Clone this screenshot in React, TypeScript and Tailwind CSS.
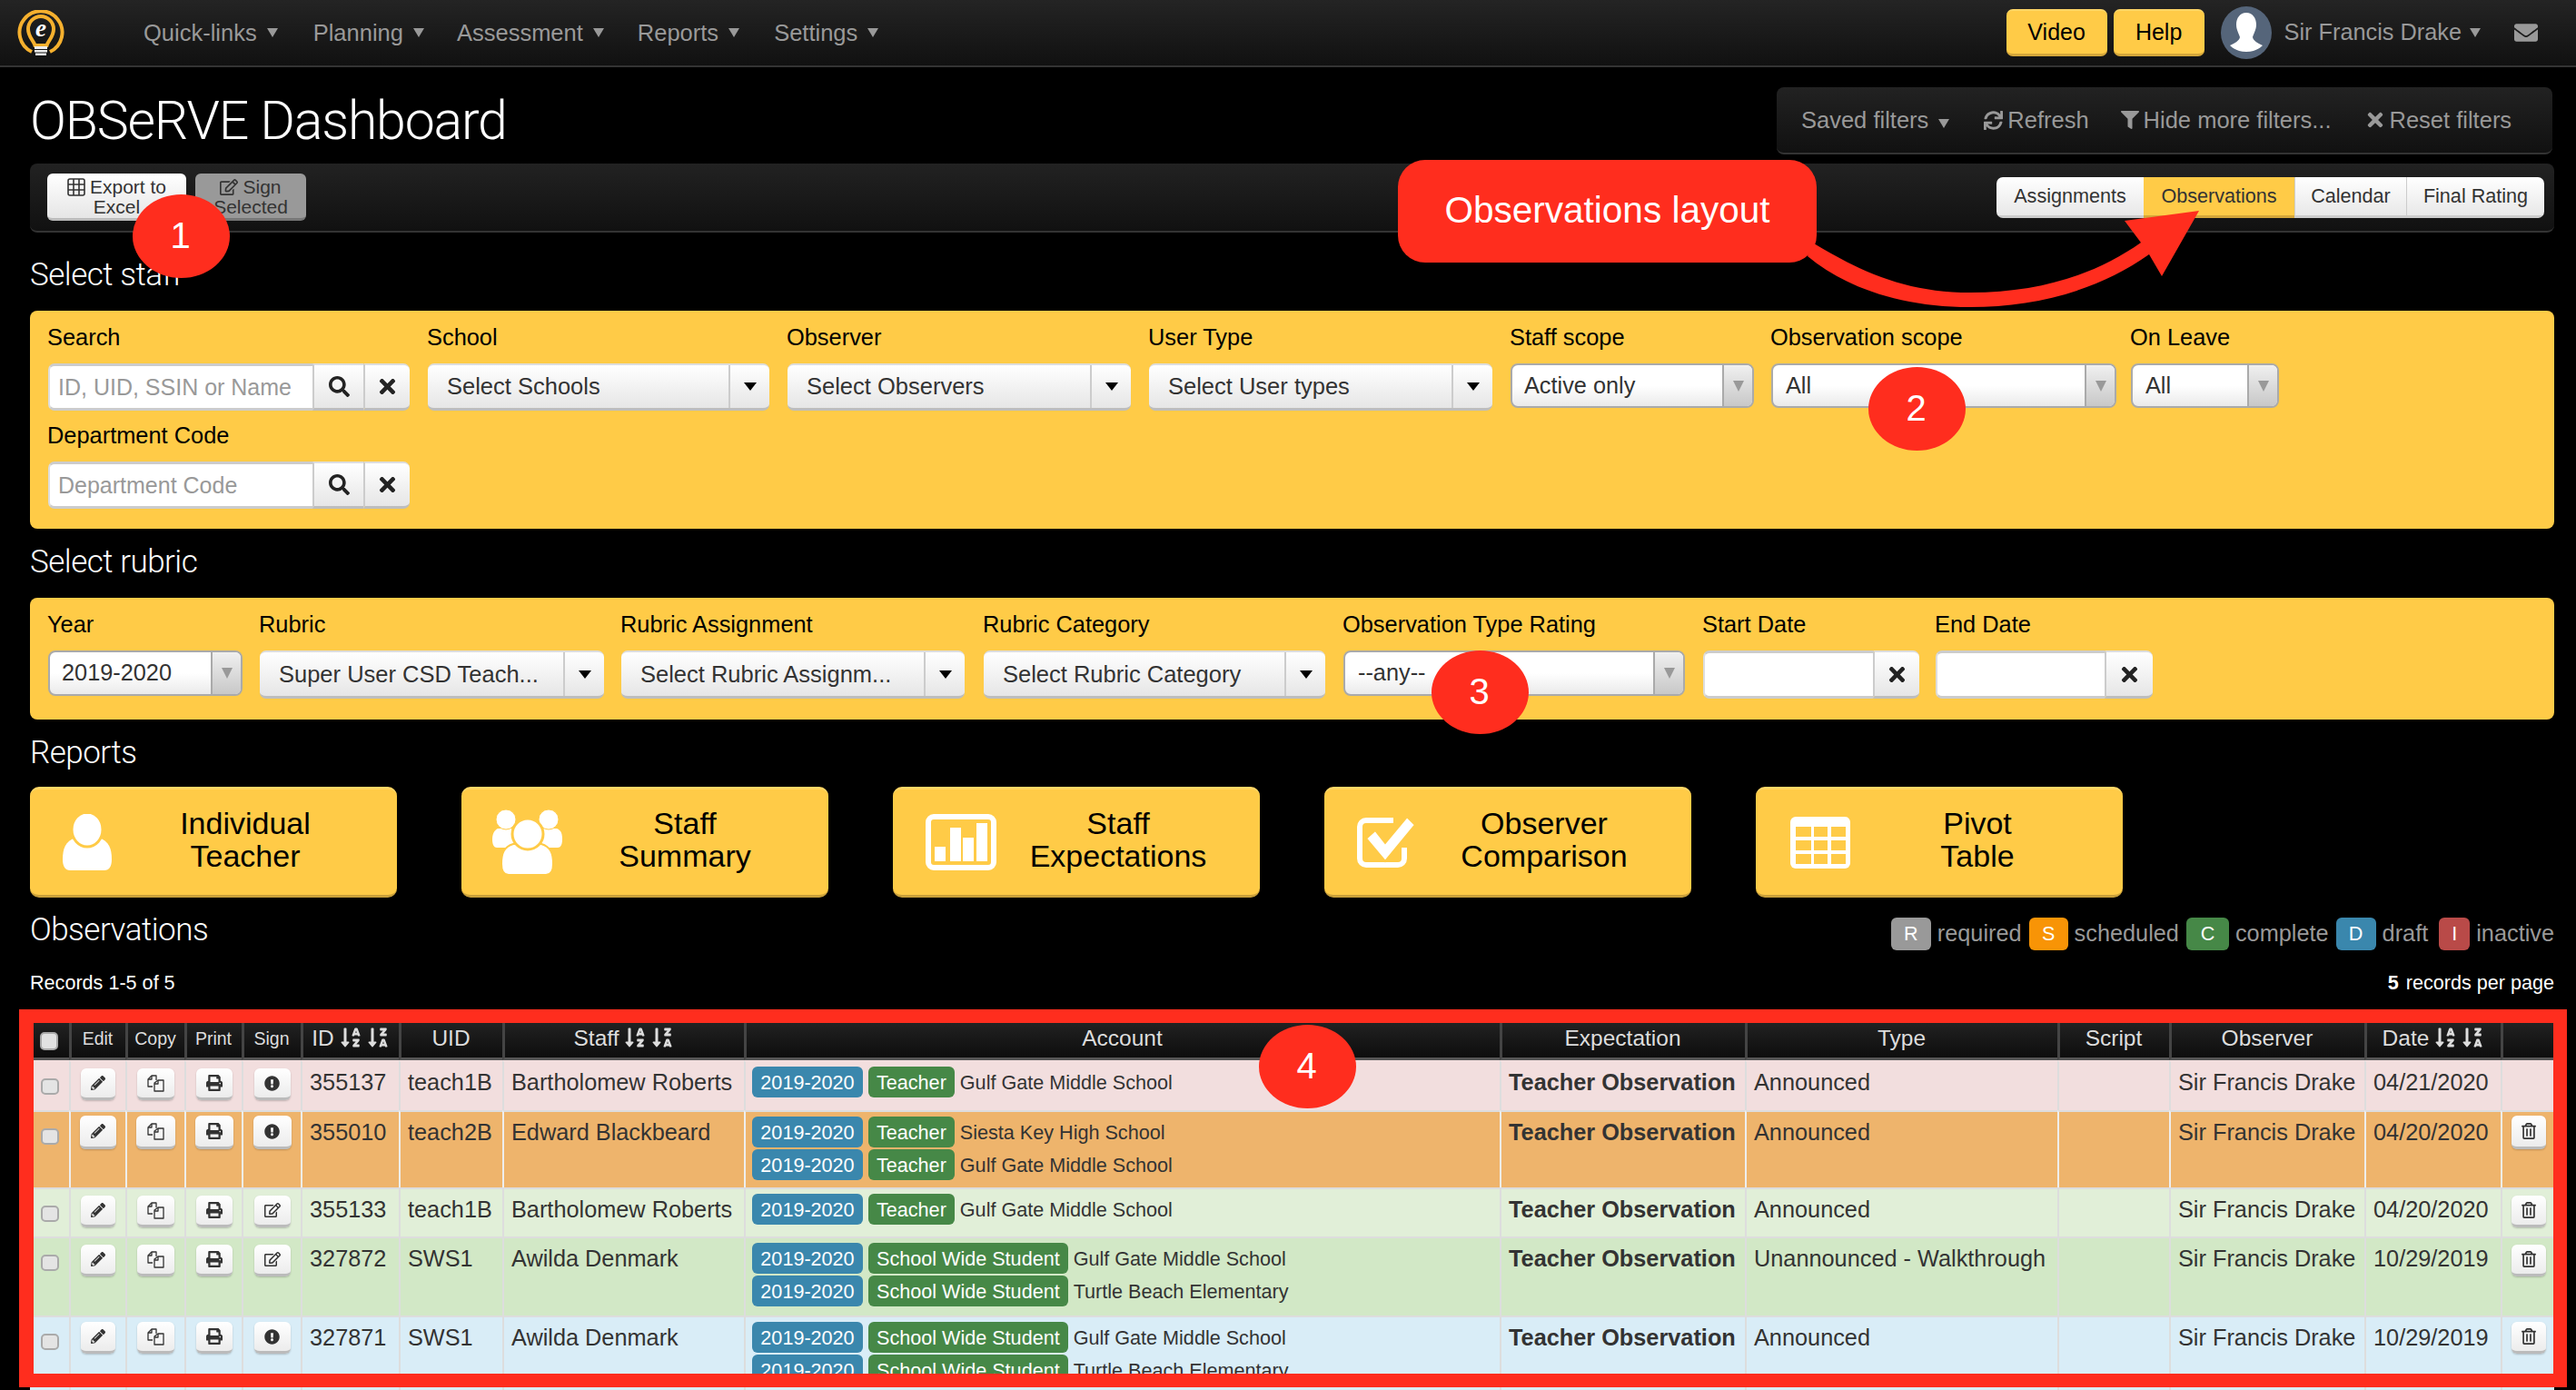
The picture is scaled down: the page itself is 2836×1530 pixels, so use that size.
import React from "react";
import {
  FaSearch, FaTimes, FaRegEdit, FaSync, FaFilter, FaEnvelope, FaSortAlphaDown, FaSortAlphaDownAlt,
  FaPencilAlt, FaPrint, FaExclamationCircle, FaRegTrashAlt,
} from "react-icons/fa";

const RED = "#ff2d1e";

function Caret() {
  return <span className="inline-block border-x-[6.5px] border-t-[10px] border-x-transparent border-t-[#999]" />;
}

function Logo() {
  return (
    <svg width="52" height="50" viewBox="0 0 52 50">
      <path d="M16 46A23.5 23.5 0 1 1 36 46" fill="none" stroke="#f5b02e" strokeWidth="4" />
      <path d="M19.5 39C18 33 12 30 12 21A14 14 0 0 1 40 21C40 30 34 33 32.5 39Z" fill="none" stroke="#f5b02e" strokeWidth="4" />
      <rect x="19" y="40" width="14" height="3" fill="#eee" />
      <rect x="19" y="44" width="14" height="2.5" fill="#eee" />
      <rect x="20" y="47.5" width="12" height="2.5" fill="#eee" />
      <text x="26" y="29" textAnchor="middle" fontFamily="Liberation Serif" fontStyle="italic" fontWeight="700" fontSize="27" fill="#fff">e</text>
    </svg>
  );
}

function Avatar() {
  return (
    <svg width="56" height="58" viewBox="0 0 56 58">
      <ellipse cx="28" cy="29" rx="28" ry="29" fill="#55657a" />
      <path d="M28 7C35 7 39 13 39 20C39 26 36 30 35 34C36 38 40 40 46 43C46 43 40 50 28 50C16 50 10 43 10 43C16 40 20 38 21 34C20 30 17 26 17 20C17 13 21 7 28 7Z" fill="#fff" />
    </svg>
  );
}

function GridIcon() {
  return (
    <svg width="20" height="20" viewBox="0 0 20 20" fill="none" stroke="#333" strokeWidth="1.6">
      <rect x="1" y="1" width="18" height="18" rx="2" />
      <path d="M1 7H19M1 13H19M7 1V19M13 1V19" />
    </svg>
  );
}

function NavItem({ label, className }: { label: string; className: string }) {
  return (
    <div className={`flex items-center gap-[11px] text-[25.5px] text-[#999] ${className}`}>
      <span>{label}</span>
      <Caret />
    </div>
  );
}

function YellowBtn({ label, className }: { label: string; className: string }) {
  return (
    <div className={`flex h-[52px] items-center justify-center rounded-[7px] border-t-2 border-b-[3px] border-t-[#ffd666] border-b-[#d5a73a] bg-[#ffcb47] text-[25px] text-black ${className}`}>
      {label}
    </div>
  );
}

function TabBtn({ label, className }: { label: string; className: string }) {
  return (
    <div className={`flex h-full items-center justify-center border-b-[3px] pt-[2px] text-[21.6px] ${className}`}>{label}</div>
  );
}

function Heading({ children, className }: { children: React.ReactNode; className: string }) {
  return (
    <div className={`flex items-center font-['Roboto',sans-serif] text-[35px] font-light tracking-[-0.5px] text-white ${className}`}>
      {children}
    </div>
  );
}

function Field({ label, className, children }: { label: string; className: string; children: React.ReactNode }) {
  return (
    <div className={`flex flex-col ${className}`}>
      <div className="-ml-[1px] flex h-[40px] items-center whitespace-nowrap pt-[1px] text-[25.4px] text-black">{label}</div>
      {children}
    </div>
  );
}

const btnFace = "bg-gradient-to-b from-white to-[#e6e6e6] border-b-[3px] border-b-[#bdbdbd] border-t-2 border-t-[#ddd]";

function SearchInput({ placeholder }: { placeholder: string }) {
  return (
    <div className="flex h-[52px]">
      <input
        readOnly
        placeholder={placeholder}
        className="h-full w-[291px] rounded-l-[7px] border-y-[3px] border-l-2 border-y-[#ccc] border-l-[#ddd] bg-white pl-[9px] text-[25px] outline-none placeholder:text-[#999]"
      />
      <div className={`flex h-full w-[56px] items-center justify-center border-l-2 border-l-[#ccc] text-[#222] ${btnFace}`}>
        <FaSearch size={23} />
      </div>
      <div className={`flex h-full w-[51px] items-center justify-center rounded-r-[7px] border-l-2 border-l-[#ccc] text-[#222] ${btnFace}`}>
        <FaTimes size={25} />
      </div>
    </div>
  );
}

function SelectBtn({ label, h }: { label: string; h?: string }) {
  return (
    <div className={`flex ${h ?? "h-[52px]"} rounded-[7px] text-[25.5px] text-[#333] ${btnFace}`}>
      <div className="flex flex-1 items-center overflow-hidden whitespace-nowrap pl-[21px]">{label}</div>
      <div className="flex w-[45px] items-center justify-center border-l-2 border-l-[#ccc]">
        <span className="inline-block border-x-[7px] border-t-[9px] border-x-transparent border-t-black" />
      </div>
    </div>
  );
}

function NativeSelect({ label, h, pad }: { label: string; h: string; pad: string }) {
  return (
    <div className={`flex ${h} overflow-hidden rounded-[8px] border-2 border-[#aaa] bg-gradient-to-b from-white via-white to-[#eaeaea] text-[25.3px] text-[#333]`}>
      <div className={`flex flex-1 items-center ${pad}`}>{label}</div>
      <div className="flex w-[33px] items-center justify-center border-l-2 border-l-[#aaa] bg-gradient-to-b from-[#f0f0f0] to-[#c8c8c8]">
        <span className="inline-block border-x-[6px] border-t-[12px] border-x-transparent border-t-[#999]" />
      </div>
    </div>
  );
}

function DateInput({ inputW, btnW }: { inputW: string; btnW: string }) {
  return (
    <div className="flex h-[53px]">
      <div className={`h-full ${inputW} rounded-l-[7px] border-y-[3px] border-l-2 border-y-[#ccc] border-l-[#ddd] bg-white`} />
      <div className={`flex h-full ${btnW} items-center justify-center rounded-r-[7px] border-l-2 border-l-[#ccc] text-[#222] ${btnFace}`}>
        <FaTimes size={25} />
      </div>
    </div>
  );
}

function IconPerson() {
  return (
    <svg width="56" height="62" viewBox="0 0 56 62" className="ml-[35px] shrink-0">
      <path d="M1 50c0-12 3-20 14-24h26c11 4 14 12 14 24 0 8-3 12-8 12H9c-5 0-8-4-8-12Z" fill="#fff" />
      <ellipse cx="28" cy="17" rx="17" ry="19" fill="#fff" stroke="#ffcb47" strokeWidth="3" />
    </svg>
  );
}
function IconGroup() {
  return (
    <svg width="77" height="72" viewBox="0 0 77 72" className="ml-[34px] shrink-0">
      <path d="M0 33c0-6 2-10 6-12h14c5 2 6 6 6 12 0 6-2 9-5 9H5c-3 0-5-3-5-9Z" fill="#fff" />
      <path d="M51 33c0-6 2-10 6-12h14c5 2 6 6 6 12 0 6-2 9-5 9H56c-3 0-5-3-5-9Z" fill="#fff" />
      <ellipse cx="15" cy="11" rx="11" ry="11" fill="#fff" stroke="#ffcb47" strokeWidth="1" />
      <ellipse cx="62" cy="11" rx="11" ry="11" fill="#fff" stroke="#ffcb47" strokeWidth="1" />
      <path d="M10 60c0-12 3-19 13-22h31c10 3 13 10 13 22 0 8-3 12-8 12H18c-5 0-8-4-8-12Z" fill="#fff" stroke="#ffcb47" strokeWidth="2" />
      <ellipse cx="39" cy="27" rx="17" ry="17" fill="#fff" stroke="#ffcb47" strokeWidth="3" />
    </svg>
  );
}
function IconBars() {
  return (
    <svg width="78" height="62" viewBox="0 0 78 62" className="ml-[36px] shrink-0">
      <rect x="3" y="3" width="72" height="56" rx="6" fill="none" stroke="#fff" strokeWidth="6" />
      <rect x="10" y="36" width="12" height="16" fill="#fff" />
      <rect x="27" y="15" width="12" height="37" fill="#fff" />
      <rect x="41" y="26" width="12" height="26" fill="#fff" />
      <rect x="56" y="10" width="12" height="42" fill="#fff" />
    </svg>
  );
}
function IconCheck() {
  return (
    <svg width="66" height="57" viewBox="0 0 66 57" className="ml-[36px] shrink-0">
      <path d="M52 34v12c0 4-3 7-7 7H10c-4 0-7-3-7-7V11c0-4 3-7 7-7h30" fill="none" stroke="#fff" strokeWidth="6" />
      <path d="M10 24l10-9 11 14L55 0l9 9-33 40Z" fill="#fff" stroke="#ffcb47" strokeWidth="2" />
    </svg>
  );
}
function IconTable() {
  const rows = [11, 26, 41];
  const cols = [{ x: 6, w: 17 }, { x: 26, w: 15 }, { x: 45, w: 16 }];
  return (
    <svg width="66" height="57" viewBox="0 0 66 57" className="ml-[38px] shrink-0">
      <rect x="0" y="0" width="66" height="57" rx="6" fill="#fff" />
      {rows.map((y) => cols.map((c) => <rect key={`${y}-${c.x}`} x={c.x} y={y} width={c.w} height="11" fill="#ffcb47" />))}
    </svg>
  );
}

function ReportBtn({ icon, lines, textW }: { icon: React.ReactNode; lines: [string, string]; textW: string }) {
  return (
    <div className="flex h-[122px] w-[404px] items-center rounded-[10px] border-t-[3px] border-b-[3px] border-t-[#ffd665] border-b-[#c9a03a] bg-[#ffcb47]">
      {icon}
      <div className={`${textW} pb-[6px] text-center text-[34px] leading-[36px] text-black`}>
        <div>{lines[0]}</div>
        <div>{lines[1]}</div>
      </div>
    </div>
  );
}

function Legend({ c, bg, w, label, className }: { c: string; bg: string; w: string; label: string; className: string }) {
  return (
    <div className={`flex items-center ${className}`}>
      <div className={`flex h-[36px] ${w} items-center justify-center rounded-[6px] text-[21.6px] text-white ${bg}`}>{c}</div>
      <span className="ml-[7px] text-[25.3px] text-[#999]">{label}</span>
    </div>
  );
}

function CopyIcon() {
  return (
    <svg width="19" height="19" viewBox="0 0 19 19" fill="none" stroke="#333" strokeWidth="1.3" strokeLinejoin="round">
      <path d="M6 13H1V5l4-4h5v5" />
      <path d="M5 1v4H1" />
      <path d="M8 18V9l4-3h6v12Z" fill="#f5f5f5" />
      <path d="M12 6v4H8" />
    </svg>
  );
}

function ActBtn({ w, big, children }: { w: string; big?: boolean; children: React.ReactNode }) {
  return (
    <div className={`mx-auto flex ${big ? "h-[37px]" : "h-[35px]"} ${w} items-center justify-center rounded-[6px] border-b-[3px] border-b-[#bbb] bg-gradient-to-b from-white to-[#ececec] text-[#333] shadow-[0_1px_2px_rgba(0,0,0,0.2)]`}>
      {children}
    </div>
  );
}

function Check({ dark }: { dark?: boolean }) {
  return <div className={`mx-auto w-[20px] rounded-[5px] border-2 ${dark ? "h-[20px] border-[#aaa] bg-[#e2e2e2]" : "h-[18px] border-[#aaa] bg-[#e4e4e4]"}`} />;
}

type Acct = { badge: string; school: string };
type Row = {
  id: string; uid: string; staff: string; accts: Acct[]; type: string; observer: string; date: string;
  sign: "alert" | "edit"; trash: boolean; h: string; bg: string; btnPt: string; big?: boolean; line: string;
};

const rows: Row[] = [
  { id: "355137", uid: "teach1B", staff: "Bartholomew Roberts", accts: [{ badge: "Teacher", school: "Gulf Gate Middle School" }], type: "Announced", observer: "Sir Francis Drake", date: "04/21/2020", sign: "alert", trash: false, h: "h-[55px]", bg: "bg-[#f2dede]", btnPt: "pt-[7px]", line: "border-[#ddd] border-t-[#f2dede]" },
  { id: "355010", uid: "teach2B", staff: "Edward Blackbeard", accts: [{ badge: "Teacher", school: "Siesta Key High School" }, { badge: "Teacher", school: "Gulf Gate Middle School" }], type: "Announced", observer: "Sir Francis Drake", date: "04/20/2020", sign: "alert", trash: true, h: "h-[85px]", bg: "bg-[#eeb46c]", btnPt: "pt-[4px]", big: true, line: "border-[#eee] border-t-[#ddd]" },
  { id: "355133", uid: "teach1B", staff: "Bartholomew Roberts", accts: [{ badge: "Teacher", school: "Gulf Gate Middle School" }], type: "Announced", observer: "Sir Francis Drake", date: "04/20/2020", sign: "edit", trash: true, h: "h-[54px]", bg: "bg-[#e1efd8]", btnPt: "pt-[7px]", line: "border-[#ddd]" },
  { id: "327872", uid: "SWS1", staff: "Awilda Denmark", accts: [{ badge: "School Wide Student", school: "Gulf Gate Middle School" }, { badge: "School Wide Student", school: "Turtle Beach Elementary" }], type: "Unannounced - Walkthrough", observer: "Sir Francis Drake", date: "10/29/2019", sign: "edit", trash: true, h: "h-[87px]", bg: "bg-[#d2e8c6]", btnPt: "pt-[7px]", line: "border-[#ddd]" },
  { id: "327871", uid: "SWS1", staff: "Awilda Denmark", accts: [{ badge: "School Wide Student", school: "Gulf Gate Middle School" }, { badge: "School Wide Student", school: "Turtle Beach Elementary" }], type: "Announced", observer: "Sir Francis Drake", date: "10/29/2019", sign: "alert", trash: true, h: "h-[87px]", bg: "bg-[#d9edf7]", btnPt: "pt-[5px]", line: "border-[#ddd]" },
];

const colWidths = ["w-[43px]", "w-[62px]", "w-[65px]", "w-[63px]", "w-[65px]", "w-[108px]", "w-[114px]", "w-[266px]", "w-[832px]", "w-[270px]", "w-[344px]", "w-[123px]", "w-[215px]", "w-[150px]", "w-[59px]"];

function Th({ children, small }: { children?: React.ReactNode; small?: boolean }) {
  return (
    <th className={`h-[42px] border-l-[3px] border-b-[3px] border-l-[#444] border-b-[#555] bg-gradient-to-b from-[#222] to-[#0e0e0e] pb-[4px] pr-[2px] text-center font-normal leading-[30px] text-[#ddd] first:border-l-0 ${small ? "text-[19.5px]" : "text-[24.5px]"}`}>
      {children}
    </th>
  );
}

function Sort() {
  return (
    <span className="ml-[6px] inline-flex items-center gap-[6px] align-[-3px]">
      <FaSortAlphaDown size={24} />
      <FaSortAlphaDownAlt size={24} />
    </span>
  );
}

function Marker({ n, className }: { n: string; className: string }) {
  return (
    <div className={`absolute flex h-[92px] w-[107px] items-center justify-center rounded-[50%] bg-[#ff2d1e] pb-[2px] pr-[2px] text-[40px] text-white ${className}`}>
      {n}
    </div>
  );
}

export default function App() {
  return (
    <div className="relative h-[1530px] w-[2836px] overflow-hidden bg-black font-['Liberation_Sans',Arial,sans-serif]">
      {/* Navbar */}
      <div className="flex h-[74px] items-center border-b-2 border-b-[#333] bg-gradient-to-b from-[#242424] to-[#111] pl-[19px]">
        <Logo />
        <NavItem label="Quick-links" className="ml-[87px]" />
        <NavItem label="Planning" className="ml-[39px]" />
        <NavItem label="Assessment" className="ml-[36px]" />
        <NavItem label="Reports" className="ml-[37px]" />
        <NavItem label="Settings" className="ml-[38px]" />
        <div className="ml-auto flex items-center">
          <YellowBtn label="Video" className="w-[111px]" />
          <YellowBtn label="Help" className="ml-[7px] w-[100px]" />
          <div className="ml-[18px]"><Avatar /></div>
          <div className="ml-[14px] flex items-center gap-[9px] text-[25.3px] text-[#999]">
            <span>Sir Francis Drake</span>
            <Caret />
          </div>
          <FaEnvelope size={26} className="ml-[37px] mr-[42px] text-[#999]" />
        </div>
      </div>

      <div className="w-[2812px] pl-[33px]">
        {/* Title */}
        <div className="flex h-[106px]">
          <div className="mt-[22px] h-[74px] font-['Roboto',sans-serif] text-[59px] font-light leading-[74px] tracking-[-1.2px] text-white">OBSeRVE Dashboard</div>
          <div className="ml-auto mr-[2px] mt-[22px] flex h-[74px] w-[854px] items-center rounded-[8px] border-b-2 border-b-[#333] bg-gradient-to-b from-[#222] to-[#111] pl-[27px] text-[25.5px] text-[#999]">
            <span>Saved filters</span>
            <span className="ml-[11px] mr-[38px]"><Caret /></span>
            <FaSync size={21} />
            <span className="ml-[5px]">Refresh</span>
            <FaFilter size={20} className="ml-[35px]" />
            <span className="ml-[5px]">Hide more filters...</span>
            <FaTimes size={24} className="ml-[36px]" />
            <span className="ml-[4px]">Reset filters</span>
          </div>
        </div>

        {/* Toolbar */}
        <div className="flex h-[76px] items-center rounded-[8px] border-b-2 border-b-[#333] bg-gradient-to-b from-[#222] to-[#111] pl-[19px] pr-[11px]">
          <div className="flex h-[52px] w-[153px] flex-col items-center justify-center rounded-[6px] border-b-[3px] border-b-[#bbb] bg-gradient-to-b from-white to-[#e6e6e6] pt-[2px] text-[21px] leading-[22px] text-[#333]">
            <div className="flex items-center gap-[5px]"><GridIcon /><span>Export to</span></div>
            <div>Excel</div>
          </div>
          <div className="ml-[10px] flex h-[52px] w-[122px] flex-col items-center justify-center rounded-[6px] border-b-[3px] border-b-[#777] bg-[#999] pt-[2px] text-[21px] leading-[22px] text-[#333]">
            <div className="flex items-center gap-[5px]"><FaRegEdit size={20} /><span>Sign</span></div>
            <div>Selected</div>
          </div>
          <div className="ml-auto flex h-[45px] w-[603px] overflow-hidden rounded-[7px] text-[#333]">
            <TabBtn label="Assignments" className="w-[162px] border-b-[#ccc] bg-gradient-to-b from-white to-[#e8e8e8]" />
            <TabBtn label="Observations" className="w-[166px] border-b-[#d5a73a] bg-[#ffcb47]" />
            <TabBtn label="Calendar" className="w-[123px] border-l border-b-[#ccc] border-l-[#ccc] bg-gradient-to-b from-white to-[#e8e8e8]" />
            <TabBtn label="Final Rating" className="w-[152px] border-l border-b-[#ccc] border-l-[#ccc] bg-gradient-to-b from-white to-[#e8e8e8]" />
          </div>
        </div>

        <Heading className="h-[86px] pt-[8px]">Select staff</Heading>

        {/* Staff panel */}
        <div className="h-[240px] rounded-[8px] bg-[#ffcb47] pl-[20px] pt-[9px]">
          <div className="flex">
            <Field label="Search" className="w-[398px] gap-[9px]"><SearchInput placeholder="ID, UID, SSIN or Name" /></Field>
            <Field label="School" className="ml-[20px] w-[376px] gap-[9px]"><SelectBtn label="Select Schools" /></Field>
            <Field label="Observer" className="ml-[20px] w-[378px] gap-[9px]"><SelectBtn label="Select Observers" /></Field>
            <Field label="User Type" className="ml-[20px] w-[378px] gap-[9px]"><SelectBtn label="Select User types" /></Field>
            <Field label="Staff scope" className="ml-[20px] w-[268px] gap-[9px]"><NativeSelect label="Active only" h="h-[49px]" pad="pl-[13px]" /></Field>
            <Field label="Observation scope" className="ml-[19px] w-[380px] gap-[9px]"><NativeSelect label="All" h="h-[49px]" pad="pl-[14px]" /></Field>
            <Field label="On Leave" className="ml-[16px] w-[163px] gap-[9px]"><NativeSelect label="All" h="h-[49px]" pad="pl-[14px]" /></Field>
          </div>
          <Field label="Department Code" className="mt-[7px] w-[398px] gap-[9px]"><SearchInput placeholder="Department Code" /></Field>
        </div>

        <Heading className="h-[76px] pb-[2px]">Select rubric</Heading>

        {/* Rubric panel */}
        <div className="h-[134px] rounded-[8px] bg-[#ffcb47] pl-[20px] pt-[9px]">
          <div className="flex">
            <Field label="Year" className="w-[214px] gap-[9px]"><NativeSelect label="2019-2020" h="h-[50px]" pad="pl-[13px]" /></Field>
            <Field label="Rubric" className="ml-[19px] w-[379px] gap-[9px]"><SelectBtn label="Super User CSD Teach..." h="h-[53px]" /></Field>
            <Field label="Rubric Assignment" className="ml-[19px] w-[378px] gap-[9px]"><SelectBtn label="Select Rubric Assignm..." h="h-[53px]" /></Field>
            <Field label="Rubric Category" className="ml-[21px] w-[376px] gap-[9px]"><SelectBtn label="Select Rubric Category" h="h-[53px]" /></Field>
            <Field label="Observation Type Rating" className="ml-[20px] w-[376px] gap-[9px]"><NativeSelect label="--any--" h="h-[50px]" pad="pl-[14px]" /></Field>
            <Field label="Start Date" className="ml-[20px] w-[238px] gap-[9px]"><DateInput inputW="w-[187px]" btnW="w-[51px]" /></Field>
            <Field label="End Date" className="ml-[18px] w-[239px] gap-[9px]"><DateInput inputW="w-[186px]" btnW="w-[53px]" /></Field>
          </div>
        </div>

        <Heading className="h-[74px]">Reports</Heading>

        {/* Reports */}
        <div className="flex gap-[71px]">
          <ReportBtn icon={<IconPerson />} lines={["Individual", "Teacher"]} textW="w-[292px]" />
          <ReportBtn icon={<IconGroup />} lines={["Staff", "Summary"]} textW="w-[270px]" />
          <ReportBtn icon={<IconBars />} lines={["Staff", "Expectations"]} textW="w-[268px]" />
          <ReportBtn icon={<IconCheck />} lines={["Observer", "Comparison"]} textW="w-[280px]" />
          <ReportBtn icon={<IconTable />} lines={["Pivot", "Table"]} textW="w-[280px]" />
        </div>

        {/* Observations header */}
        <div className="flex h-[78px] items-center pt-[2px]">
          <Heading className="mb-[8px]">Observations</Heading>
          <div className="ml-auto flex items-center">
            <Legend c="R" bg="bg-[#999]" w="w-[44px]" label="required" className="" />
            <Legend c="S" bg="bg-[#f89406]" w="w-[43px]" label="scheduled" className="ml-[8px]" />
            <Legend c="C" bg="bg-[#468847]" w="w-[47px]" label="complete" className="ml-[8px]" />
            <Legend c="D" bg="bg-[#3a87ad]" w="w-[44px]" label="draft" className="ml-[8px]" />
            <Legend c="I" bg="bg-[#b94a48]" w="w-[34px]" label="inactive" className="ml-[12px]" />
          </div>
        </div>
        <div className="flex h-[32px] items-center text-[21.6px] text-white">
          <span>Records 1-5 of 5</span>
          <span className="ml-auto"><b className="mr-[8px]">5</b>records per page</span>
        </div>

        {/* Table */}
        <table className="mt-[27px] w-[2779px] table-fixed border-separate border-spacing-0">
          <colgroup>
            {colWidths.map((w, i) => <col key={i} className={w} />)}
          </colgroup>
          <thead>
            <tr>
              <Th><div className="pt-[6px]"><Check dark /></div></Th>
              <Th small>Edit</Th>
              <Th small>Copy</Th>
              <Th small>Print</Th>
              <Th small>Sign</Th>
              <Th>ID<Sort /></Th>
              <Th>UID</Th>
              <Th>Staff<Sort /></Th>
              <Th>Account</Th>
              <Th>Expectation</Th>
              <Th>Type</Th>
              <Th>Script</Th>
              <Th>Observer</Th>
              <Th>Date<Sort /></Th>
              <Th />
            </tr>
          </thead>
          <tbody>
            {rows.map((r) => {
              const td = `${r.h} ${r.bg} ${r.line} border-l-2 border-t-2 p-0 align-top first:border-l-0`;
              const txt = "whitespace-nowrap pl-[8px] pt-[4px] text-[25.3px] leading-[36px] text-[#333]";
              return (
                <tr key={r.id}>
                  <td className={td}><div className="pt-[18px]"><Check /></div></td>
                  <td className={td}><div className={r.btnPt}><ActBtn w={r.big ? "w-[40px]" : "w-[38px]"} big={r.big}><FaPencilAlt size={16} /></ActBtn></div></td>
                  <td className={td}><div className={r.btnPt}><ActBtn w={r.big ? "w-[43px]" : "w-[41px]"} big={r.big}><CopyIcon /></ActBtn></div></td>
                  <td className={td}><div className={r.btnPt}><ActBtn w={r.big ? "w-[42px]" : "w-[40px]"} big={r.big}><FaPrint size={18} /></ActBtn></div></td>
                  <td className={td}><div className={r.btnPt}><ActBtn w={r.big ? "w-[42px]" : "w-[40px]"} big={r.big}>{r.sign === "alert" ? <FaExclamationCircle size={17} /> : <FaRegEdit size={18} />}</ActBtn></div></td>
                  <td className={td}><div className={txt}>{r.id}</div></td>
                  <td className={td}><div className={txt}>{r.uid}</div></td>
                  <td className={td}><div className={txt}>{r.staff}</div></td>
                  <td className={td}>
                    <div className="flex flex-col gap-[2px] pl-[7px] pt-[5px]">
                      {r.accts.map((a, i) => (
                        <div key={i} className="flex h-[34px] items-center whitespace-nowrap text-[21.6px] text-[#333]">
                          <span className="flex h-full w-[122px] items-center justify-center rounded-[6px] bg-[#3a87ad] pt-[2px] text-white">2019-2020</span>
                          <span className="ml-[6px] flex h-full items-center rounded-[6px] bg-[#468847] px-[9px] pt-[2px] text-white">{a.badge}</span>
                          <span className="ml-[6px] pt-[2px]">{a.school}</span>
                        </div>
                      ))}
                    </div>
                  </td>
                  <td className={td}><div className={`${txt} font-bold`}>Teacher Observation</div></td>
                  <td className={td}><div className={txt}>{r.type}</div></td>
                  <td className={td} />
                  <td className={td}><div className={txt}>{r.observer}</div></td>
                  <td className={td}><div className={txt}>{r.date}</div></td>
                  <td className={td}>
                    {r.trash && <div className={r.btnPt}><ActBtn w="w-[38px]" big={r.big}><FaRegTrashAlt size={18} /></ActBtn></div>}
                  </td>
                </tr>
              );
            })}
          </tbody>
        </table>
      </div>

      {/* Annotations */}
      <div className="pointer-events-none absolute left-[21px] top-[1111px] h-[416px] w-[2805px] border-y-[15px] border-l-[16px] border-r-[15px] border-[#ff2d1e]" />
      <div className="absolute left-[1539px] top-[176px] flex h-[113px] w-[461px] items-center justify-center rounded-[30px] bg-[#ff2d1e] pb-[2px] text-[40.5px] text-white">
        Observations layout
      </div>
      <svg className="absolute left-[1985px] top-[225px]" width="445" height="120" viewBox="1985 225 445 120">
        <path
          d="M1997 268C2050 300 2100 322 2169 322C2250 322 2310 300 2357 267L2339 243L2421 232L2380 304L2366 280C2310 320 2240 338 2169 338C2090 338 2030 315 1990 282Z"
          fill={RED}
        />
      </svg>
      <Marker n="1" className="left-[146px] top-[214px]" />
      <Marker n="2" className="left-[2057px] top-[404px]" />
      <Marker n="3" className="left-[1576px] top-[716px]" />
      <Marker n="4" className="left-[1386px] top-[1128px]" />
    </div>
  );
}
